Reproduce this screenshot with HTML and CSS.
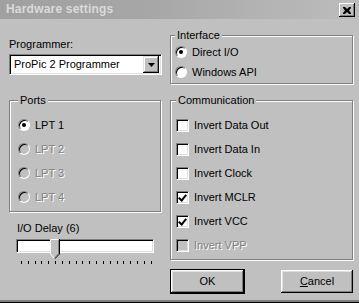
FILE: index.html
```html
<!DOCTYPE html>
<html lang="en">
<head>
    <meta charset="UTF-8">
    <title>Hardware settings</title>
    <link rel="stylesheet" href="styles.css">
</head>
<body>
    <div class="dialog">
        <div class="titlebar">
            <span class="title">Hardware settings</span>
            <button class="close">
                <svg width="8" height="7" viewBox="0 0 8 7"><path d="M0 0h2l2 2 2-2h2v1l-2 2.5 2 2.5v1h-2l-2-2-2 2h-2v-1l2-2.5-2-2.5z" fill="#000"/></svg>
            </button>
        </div>

        <div class="content">
            <div class="col left">
                <div class="label">Programmer:</div>
                <div class="combo">
                    <span class="combo-text">ProPic 2 Programmer</span>
                    <span class="combo-btn">
                        <svg width="7" height="4" viewBox="0 0 7 4"><path d="M0 0h7l-3.5 4z" fill="#000"/></svg>
                    </span>
                </div>

                <fieldset class="group ports">
                    <legend>Ports</legend>
                    <div class="opt"><span class="radio on"></span>LPT 1</div>
                    <div class="opt off"><span class="radio"></span>LPT 2</div>
                    <div class="opt off"><span class="radio"></span>LPT 3</div>
                    <div class="opt off"><span class="radio"></span>LPT 4</div>
                </fieldset>

                <div class="delay">
                    <div class="label">I/O Delay (6)</div>
                    <div class="slider">
                        <div class="track"></div>
                        <svg class="thumb" width="10" height="20" viewBox="0 0 10 20">
                            <path d="M0.5 0.5h8v14l-4 4.5l-4-4.5z" fill="#c0c0c0"/>
                            <path d="M0.5 15v-14.5h8" fill="none" stroke="#fff"/>
                            <path d="M9.5 0v15l-5 5" fill="none" stroke="#000"/>
                            <path d="M8.5 1v13.5l-4 4.5" fill="none" stroke="#808080"/>
                            <path d="M0.5 15l4 4.5" fill="none" stroke="#fff"/>
                        </svg>
                    </div>
                    <div class="ticks">
                        <i></i><i></i><i></i><i></i><i></i><i></i><i></i><i></i><i></i><i></i>
                        <i></i><i></i><i></i><i></i><i></i><i></i><i></i><i></i><i></i><i></i>
                    </div>
                </div>
            </div>

            <div class="col right">
                <fieldset class="group iface">
                    <legend>Interface</legend>
                    <div class="opt"><span class="radio on"></span>Direct I/O</div>
                    <div class="opt"><span class="radio"></span>Windows API</div>
                </fieldset>

                <fieldset class="group comm">
                    <legend>Communication</legend>
                    <div class="opt"><span class="check"></span>Invert Data Out</div>
                    <div class="opt"><span class="check"></span>Invert Data In</div>
                    <div class="opt"><span class="check"></span>Invert Clock</div>
                    <div class="opt"><span class="check on"></span>Invert MCLR</div>
                    <div class="opt"><span class="check on"></span>Invert VCC</div>
                    <div class="opt off"><span class="check"></span>Invert VPP</div>
                </fieldset>

                <div class="buttons">
                    <button class="btn default">OK</button>
                    <button class="btn"><u>C</u>ancel</button>
                </div>
            </div>
        </div>
    </div>
</body>
</html>
```

FILE: styles.css
```css
body {
    margin: 0;
    background-color: #c0c0c0;
    font-family: "Liberation Sans", Arial, sans-serif;
    font-size: 11px;
    line-height: 13px;
    color: #000;
}

.dialog {
    width: 359px;
    height: 303px;
    box-sizing: border-box;
    border-bottom: 1px solid #000;
    box-shadow: inset 0 -2px #808080;
}

/* title bar */
.titlebar {
    height: 19px;
    display: flex;
    align-items: center;
    justify-content: space-between;
    padding: 0 4px 0 6px;
    background: linear-gradient(to right, #a0a0a0, #a6a6a6 40%, #b2b2b2 70%, #bcbcbc);
}

.title {
    color: #dadada;
    font-weight: bold;
    font-size: 12px;
    letter-spacing: 0.2px;
}

.close {
    width: 16px;
    height: 14px;
    padding: 0;
    margin-top: 1px;
    display: flex;
    align-items: center;
    justify-content: center;
    background: #c0c0c0;
    border: none;
    box-shadow: inset -1px -1px #000, inset 1px 1px #fff, inset -2px -2px #808080;
}

/* columns */
.content {
    display: flex;
    gap: 8px;
    padding: 0 6px 0 9px;
}

.left {
    width: 153px;
}

.right {
    width: 183px;
}

.label {
    margin-top: 19px;
}

.combo {
    margin-top: 3px;
    height: 21px;
    box-sizing: border-box;
    display: flex;
    align-items: center;
    justify-content: space-between;
    background: #fff;
    border: 1px solid;
    border-color: #808080 #fff #fff #808080;
    box-shadow: inset 1px 1px #000, inset -1px -1px #dfdfdf;
    padding: 2px;
}

.combo-text {
    padding-left: 2px;
}

.combo-btn {
    width: 16px;
    height: 17px;
    box-sizing: border-box;
    display: flex;
    align-items: center;
    justify-content: center;
    background: #c0c0c0;
    box-shadow: inset -1px -1px #000, inset 1px 1px #dfdfdf, inset -2px -2px #808080, inset 2px 2px #fff;
}

/* group boxes */
.group {
    margin: 0;
    padding: 6px 0 2px 8px;
    min-width: 0;
    border: 1px solid #808080;
    box-shadow: inset 1px 1px #fff, 1px 1px #fff;
}

.group legend {
    padding: 0 2px;
    margin-left: 0;
    background: #c0c0c0;
}

.ports {
    margin-top: 19px;
    width: 152px;
    box-sizing: border-box;
}

.iface {
    margin-top: 10px;
    padding: 0 0 1px 4px;
}

.comm {
    margin-top: 10px;
    padding-left: 5px;
}

.opt {
    height: 24px;
    display: flex;
    align-items: center;
    gap: 5px;
}

.iface .opt {
    height: 20px;
}

.off {
    color: #808080;
    text-shadow: 1px 1px #fff;
}

/* radio and check */
.radio {
    width: 12px;
    height: 12px;
    box-sizing: border-box;
    border-radius: 50%;
    background: #fff;
    border: 1px solid;
    border-color: #808080 #fff #fff #808080;
    box-shadow: inset 1px 1px #000;
    display: flex;
    align-items: center;
    justify-content: center;
}

.off .radio {
    background: #c0c0c0;
}

.radio.on::after {
    content: "";
    width: 4px;
    height: 4px;
    border-radius: 50%;
    background: #000;
}

.check {
    width: 13px;
    height: 13px;
    box-sizing: border-box;
    background: #fff;
    border: 1px solid;
    border-color: #808080 #fff #fff #808080;
    box-shadow: inset 1px 1px #000, inset -1px -1px #dfdfdf;
    position: relative;
}

.off .check {
    background: #c0c0c0;
}

.check.on::after {
    content: "";
    position: absolute;
    left: 2px;
    top: 1px;
    width: 3px;
    height: 6px;
    border: solid #000;
    border-width: 0 2px 2px 0;
    transform: translate(1px, 0) rotate(40deg);
}

/* slider */
.delay .label {
    margin-top: 10px;
    padding-left: 8px;
}

.slider {
    margin-top: 4px;
    margin-left: 7px;
    width: 138px;
    height: 20px;
    position: relative;
}

.track {
    margin-top: 3px;
    height: 14px;
    box-sizing: border-box;
    background: #fff;
    border: 1px solid;
    border-color: #808080 #fff #fff #808080;
    box-shadow: inset 1px 1px #000, inset -1px -1px #dfdfdf;
}

.thumb {
    position: absolute;
    left: 34px;
    top: 0;
}

.ticks {
    margin: 2px 0 0 12px;
    width: 131px;
    display: flex;
    justify-content: space-between;
}

.ticks i {
    width: 1px;
    height: 3px;
    background: #000;
}

/* buttons */
.buttons {
    margin-top: 10px;
    display: flex;
    justify-content: space-between;
}

.btn {
    width: 72px;
    height: 23px;
    padding: 0;
    font: inherit;
    color: #000;
    background: #c0c0c0;
    border: none;
    box-shadow: inset -1px -1px #000, inset 1px 1px #fff, inset -2px -2px #808080, inset 2px 2px #dfdfdf;
}

.btn.default {
    width: 75px;
    height: 25px;
    margin-top: -1px;
    border: 1px solid #000;
}

.btn u {
    text-decoration: underline;
}
```
